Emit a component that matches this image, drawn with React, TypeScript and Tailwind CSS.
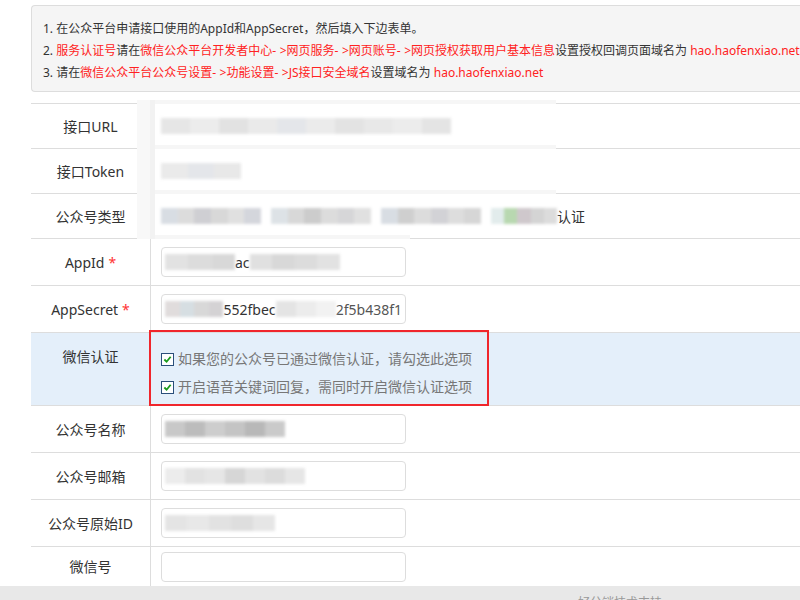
import React from 'react';

const font = { fontFamily: '"Noto Sans", "Noto Sans CJK SC", sans-serif' };

function Blur({ w, shades }: { w: number; shades: string[] }) {
  return (
    <div className="flex h-[16px] blur-[1.5px]" style={{ width: w }}>
      {shades.map((c, i) => (
        <div key={i} className="h-full flex-1" style={{ background: c }} />
      ))}
    </div>
  );
}

function Arrow() {
  return (
    <>
      <span className="tracking-[3.5px]">-</span>&gt;
    </>
  );
}

function Row({
  label,
  star,
  h,
  children,
}: {
  label: string;
  star?: boolean;
  h: string;
  children?: React.ReactNode;
}) {
  return (
    <div className={`flex border-t border-[#ddd] ${h}`}>
      <div className="flex w-[120px] shrink-0 items-center justify-center border-r border-[#ddd] text-[14px] text-[#333]">
        {label}
        {star && <span className="ml-1 text-[#f33]">*</span>}
      </div>
      <div className="flex flex-1 items-center px-[10px]">{children}</div>
    </div>
  );
}

function Input({ children }: { children?: React.ReactNode }) {
  return (
    <div className="flex h-[30px] w-[245px] items-center overflow-hidden rounded-[4px] border border-[#ddd] bg-white px-[3px] text-[14px] text-[#333]">
      {children}
    </div>
  );
}

function Check() {
  return (
    <span className="mr-[4px] inline-flex h-[13px] w-[13px] items-center justify-center border border-[#2b4f7a] bg-white">
      <svg viewBox="0 0 10 10" className="h-[9px] w-[9px]">
        <path d="M1.5 5 L4 7.5 L8.5 2" fill="none" stroke="#1a9a1a" strokeWidth="2" />
      </svg>
    </span>
  );
}

export default function App() {
  return (
    <div className="relative h-[600px] w-[800px] overflow-hidden bg-white" style={font}>
      <div className="pl-[31px] pt-[5px]">
        <div className="h-[87px] rounded-l-[4px] border border-r-0 border-[#ddd] bg-[#f5f5f5] pl-[11px] pt-[12px] text-[12px] leading-[22px] text-[#333]">
          <div>1. 在公众平台申请接口使用的AppId和AppSecret，然后填入下边表单。</div>
          <div className="whitespace-nowrap">
            2. <span className="text-[#f22]">服务认证号</span>请在
            <span className="text-[#f22]">
              微信公众平台开发者中心<Arrow />网页服务<Arrow />网页账号<Arrow />网页授权获取用户基本信息
            </span>
            设置授权回调页面域名为 <span className="text-[#f22]">hao.haofenxiao.net</span>
          </div>
          <div>
            3. 请在
            <span className="text-[#f22]">
              微信公众平台公众号设置<Arrow />功能设置<Arrow />JS接口安全域名
            </span>
            设置域名为 <span className="text-[#f22]">hao.haofenxiao.net</span>
          </div>
        </div>

        <div className="mt-[11px]">
          <Row label="接口URL" h="h-[45px]">
            <Blur w={290} shades={['#e6e6e6', '#ececec', '#e2e2e2', '#eaeaea', '#e4e6ea', '#ebebeb', '#e3e3e3', '#e8e8e8', '#ececec', '#e4e4e4']} />
          </Row>
          <Row label="接口Token" h="h-[45px]">
            <Blur w={80} shades={['#eaeaea', '#e4e6ea', '#e8e8e8']} />
          </Row>
          <Row label="公众号类型" h="h-[45px]">
            <div className="flex items-center gap-[10px]">
              <Blur w={100} shades={['#d8dde3', '#dcdcdc', '#cfcfd3', '#d8d8d8', '#e0e0e0', '#d4d6dc']} />
              <Blur w={100} shades={['#dde2e6', '#d8d8d8', '#cccccc', '#dcdcdc', '#d6d6d8', '#e0e0e0']} />
              <Blur w={100} shades={['#d8dde3', '#cfcfcf', '#dcdcdc', '#d2d2d6', '#dddddd', '#d6d6d6']} />
              <div className="flex items-center">
                <Blur w={66} shades={['#e2ecec', '#b8d8b0', '#cfc8cc', '#d4d4d4', '#dcdcdc']} />
                <span className="text-[14px] text-[#333]">认证</span>
              </div>
            </div>
          </Row>
          <Row label="AppId" star h="h-[47px]">
            <Input>
              <Blur w={70} shades={['#e2e2e2', '#dcdcdc', '#d8d8d8']} />
              <span>ac</span>
              <Blur w={90} shades={['#e0e0e0', '#d8d8d8', '#dcdcdc', '#e2e2e2']} />
            </Input>
          </Row>
          <Row label="AppSecret" star h="h-[47px]">
            <Input>
              <Blur w={68} shades={['#e0dcdc', '#d6dee2', '#d8d8d8', '#d4d2d4']} />
              <span>552fbec</span>
              <Blur w={70} shades={['#e4e4e4', '#ececec', '#f2f2f2']} />
              <span className="text-[#555]">2f5b438f1</span>
            </Input>
          </Row>
          <div className="flex h-[73px] border-t border-[#ddd] bg-[#e4effa]">
            <div className="flex w-[120px] shrink-0 justify-center border-r border-[#ddd] pt-[13px] text-[14px] text-[#333]">
              微信认证
            </div>
            <div className="flex-1 pl-[10px] pt-[12px] text-[14px] leading-[28px] text-[#777]">
              <div className="flex items-center">
                <Check />
                如果您的公众号已通过微信认证，请勾选此选项
              </div>
              <div className="flex items-center">
                <Check />
                开启语音关键词回复，需同时开启微信认证选项
              </div>
            </div>
          </div>
          <Row label="公众号名称" h="h-[47px]">
            <Input>
              <Blur w={120} shades={['#c8c8c8', '#bcbcbc', '#cdcdcd', '#c4c4c4', '#b8b8b8', '#cacaca']} />
            </Input>
          </Row>
          <Row label="公众号邮箱" h="h-[47px]">
            <Input>
              <Blur w={140} shades={['#ececec', '#e2e2e2', '#e6e6e6', '#d6d6d6', '#e2e2e2', '#dcdcdc', '#e6e6e6']} />
            </Input>
          </Row>
          <Row label="公众号原始ID" h="h-[47px]">
            <Input>
              <Blur w={110} shades={['#e4e4e4', '#e8e8e8', '#e2e2e2', '#dedede', '#e6e6e6']} />
            </Input>
          </Row>
          <Row label="微信号" h="h-[40px]">
            <Input />
          </Row>
        </div>
      </div>

      {/* pasted patch over the first rows */}
      <div className="absolute left-[137px] top-[100px] h-[4px] w-[419px] bg-[#f6f6f6]" />
      <div className="absolute left-[137px] top-[145px] h-[4px] w-[419px] bg-[#f6f6f6]" />
      <div className="absolute left-[137px] top-[190px] h-[4px] w-[419px] bg-[#f6f6f6]" />
      <div className="absolute left-[137px] top-[235px] h-[4px] w-[273px] bg-[#f6f6f6]" />
      <div className="absolute left-[137px] top-[100px] h-[139px] w-[13px] bg-[#f8f8f8]" />
      <div className="absolute left-[150px] top-[100px] h-[139px] w-[5px] bg-[#f2f2f2]" />

      <div className="absolute left-[149px] top-[330px] h-[76px] w-[340px] border-2 border-[#f0262c]" />

      <div className="absolute left-0 top-[586px] h-[14px] w-full bg-[#e8e8e8]">
        <div className="absolute left-[578px] top-[8px] text-[12px] text-[#999]">好分销技术支持</div>
      </div>
    </div>
  );
}
